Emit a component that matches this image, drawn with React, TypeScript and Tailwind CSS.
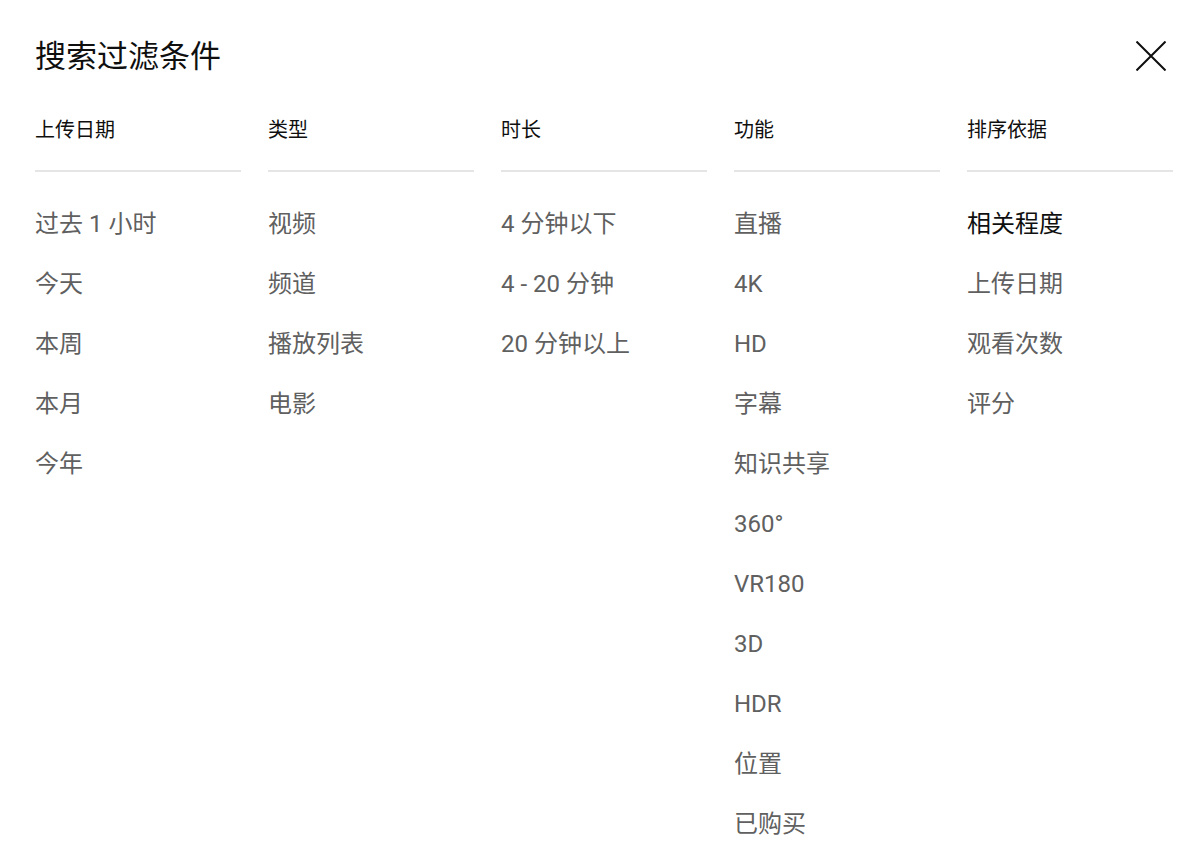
import React from "react";

const columns: { title: string; items: string[]; selected?: number }[] = [
  { title: "上传日期", items: ["过去 1 小时", "今天", "本周", "本月", "今年"] },
  { title: "类型", items: ["视频", "频道", "播放列表", "电影"] },
  { title: "时长", items: ["4 分钟以下", "4 - 20 分钟", "20 分钟以上"] },
  {
    title: "功能",
    items: ["直播", "4K", "HD", "字幕", "知识共享", "360°", "VR180", "3D", "HDR", "位置", "已购买"],
  },
  { title: "排序依据", items: ["相关程度", "上传日期", "观看次数", "评分"], selected: 0 },
];

export default function App() {
  return (
    <div
      className="w-[1200px] h-[851px] bg-white overflow-hidden pl-[35px] pr-[27px] pt-[38px]"
      style={{ fontFamily: 'Roboto, "Noto Sans CJK SC", sans-serif' }}
    >
      <div className="flex items-center justify-between h-[38px]">
        <h1 className="text-[31px] leading-[38px] text-[#0f0f0f] font-normal">搜索过滤条件</h1>
        <button className="w-[44px] h-[44px] -my-[3px] -mt-[5px] flex items-center justify-center">
          <svg width="30" height="30" viewBox="0 0 30 30" fill="none" stroke="#0f0f0f" strokeWidth="2">
            <path d="M0.5 0.5 L29.5 29.5 M29.5 0.5 L0.5 29.5" />
          </svg>
        </button>
      </div>
      <div className="grid grid-cols-5 gap-x-[27px] mt-[40px]">
        {columns.map((col) => (
          <div key={col.title}>
            <div className="h-[56px] border-b-2 border-[#e5e5e5]">
              <div className="text-[20px] leading-[28px] text-[#0f0f0f]">{col.title}</div>
            </div>
            <div className="pt-[22px]">
              {col.items.map((it, i) => (
                <div
                  key={it}
                  className={
                    i === col.selected
                      ? "text-[24px] leading-[60px] text-[#0f0f0f]"
                      : "text-[24px] leading-[60px] text-[#606060]"
                  }
                >
                  {it}
                </div>
              ))}
            </div>
          </div>
        ))}
      </div>
    </div>
  );
}
